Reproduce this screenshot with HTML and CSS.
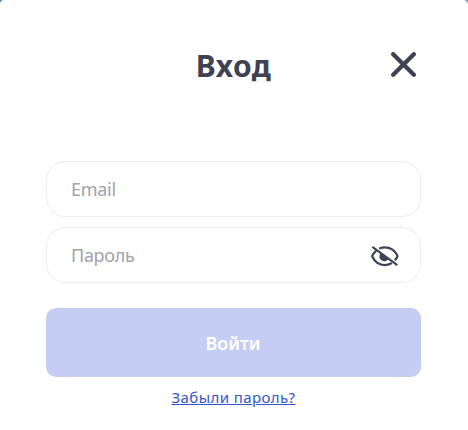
FILE: index.html
```html
<!DOCTYPE html>
<html lang="ru">
<head>
  <meta charset="UTF-8" />
  <meta name="viewport" content="width=device-width, initial-scale=1" />
  <title>Вход</title>
  <link rel="stylesheet" href="styles.css">
</head>
<body>

  <div class="modal">
    <div class="modal-header">
      <h1 class="modal-title">Вход</h1>
      <button type="button" class="close-btn" aria-label="Закрыть">
        <svg width="26" height="26" viewBox="0 0 26 26" fill="none" stroke="#3f4254" stroke-width="4.3" stroke-linecap="round">
          <path d="M3.200 2.200l20.600 20.600M23.800 2.200L3.200 22.800" />
        </svg>
      </button>
    </div>

    <form class="login-form">
      <div class="field">
        <input type="email" name="email" placeholder="Email" />
      </div>
      <div class="field">
        <input type="password" name="password" placeholder="Пароль" />
        <button type="button" class="eye-btn" aria-label="Показать пароль">
          <svg width="28" height="22" viewBox="0 0 28 22" fill="none" stroke="#3f4254" stroke-width="2.2" stroke-linecap="round">
            <path d="M9 3.200C10.500 2.600 12 2.300 13.700 2.300c6.300 0 10.500 4 12.500 8 .3.600.3 1.200 0 1.800-.5.900-1 1.700-1.800 2.500" />
            <path d="M4.700 6.200C3.300 7.500 2.200 8.900 1.500 10.300c-.3.600-.3 1.200 0 1.800 2 4 6 8 12.200 8 2.400 0 4.500-.6 6.300-1.600" />
            <path d="M9.300 8.500l8 5.700a4.400 4.400 0 0 1-8-5.700z" fill="#3f4254" stroke="none" />
            <path d="M2 2.400l23.600 17.200" />
          </svg>
        </button>
      </div>
      <button type="submit" class="submit-btn">Войти</button>
    </form>

    <a href="#" class="forgot-link">Забыли пароль?</a>
  </div>

</body>
</html>
```

FILE: styles.css
```css
* {
  box-sizing: border-box;
}

body {
  margin: 0;
  font-family: "Noto Sans", sans-serif;
  background: linear-gradient(to right, #457c9c, #8c96ba);
}

.modal {
  display: flex;
  flex-direction: column;
  height: 430px;
  padding: 45px 47px 0 46px;
  background: #fff;
  border-radius: 4px 5px 0 0;
}

.modal-header {
  display: grid;
  grid-template-columns: 30px 1fr 30px;
  align-items: start;
  height: 42px;
  margin-bottom: 74px;
}

.modal-title {
  grid-column: 2;
  margin: 0;
  font-size: 30px;
  line-height: 42px;
  font-weight: 700;
  letter-spacing: 0.5px;
  text-align: center;
  color: #3f4254;
}

.close-btn,
.eye-btn {
  display: flex;
  padding: 0;
  border: none;
  background: none;
  cursor: pointer;
}

.close-btn {
  margin-top: 7px;
  margin-left: -1px;
}

.eye-btn {
  margin-top: 2px;
}

.login-form {
  display: flex;
  flex-direction: column;
}

.field {
  display: flex;
  align-items: center;
  height: 56px;
  margin-bottom: 10px;
  padding: 0 21px 0 24px;
  border: 1px solid #ececec;
  border-radius: 19px;
}

.field input {
  flex: 1;
  min-width: 0;
  padding: 0;
  border: none;
  outline: none;
  background: none;
  font-family: inherit;
  font-size: 18px;
  letter-spacing: -0.3px;
  color: #3f4254;
}

.field input::placeholder {
  color: #a1a1aa;
}

.submit-btn {
  height: 69px;
  margin-top: 15px;
  padding: 0 1px 0 0;
  border: none;
  border-radius: 10px;
  background: #c5cdf4;
  font-family: inherit;
  font-size: 18px;
  font-weight: 600;
  color: #fff;
  cursor: pointer;
}

.forgot-link {
  align-self: center;
  margin-top: 10px;
  font-size: 15px;
  line-height: 21px;
  letter-spacing: 0.4px;
  color: #3454d1;
}
```
